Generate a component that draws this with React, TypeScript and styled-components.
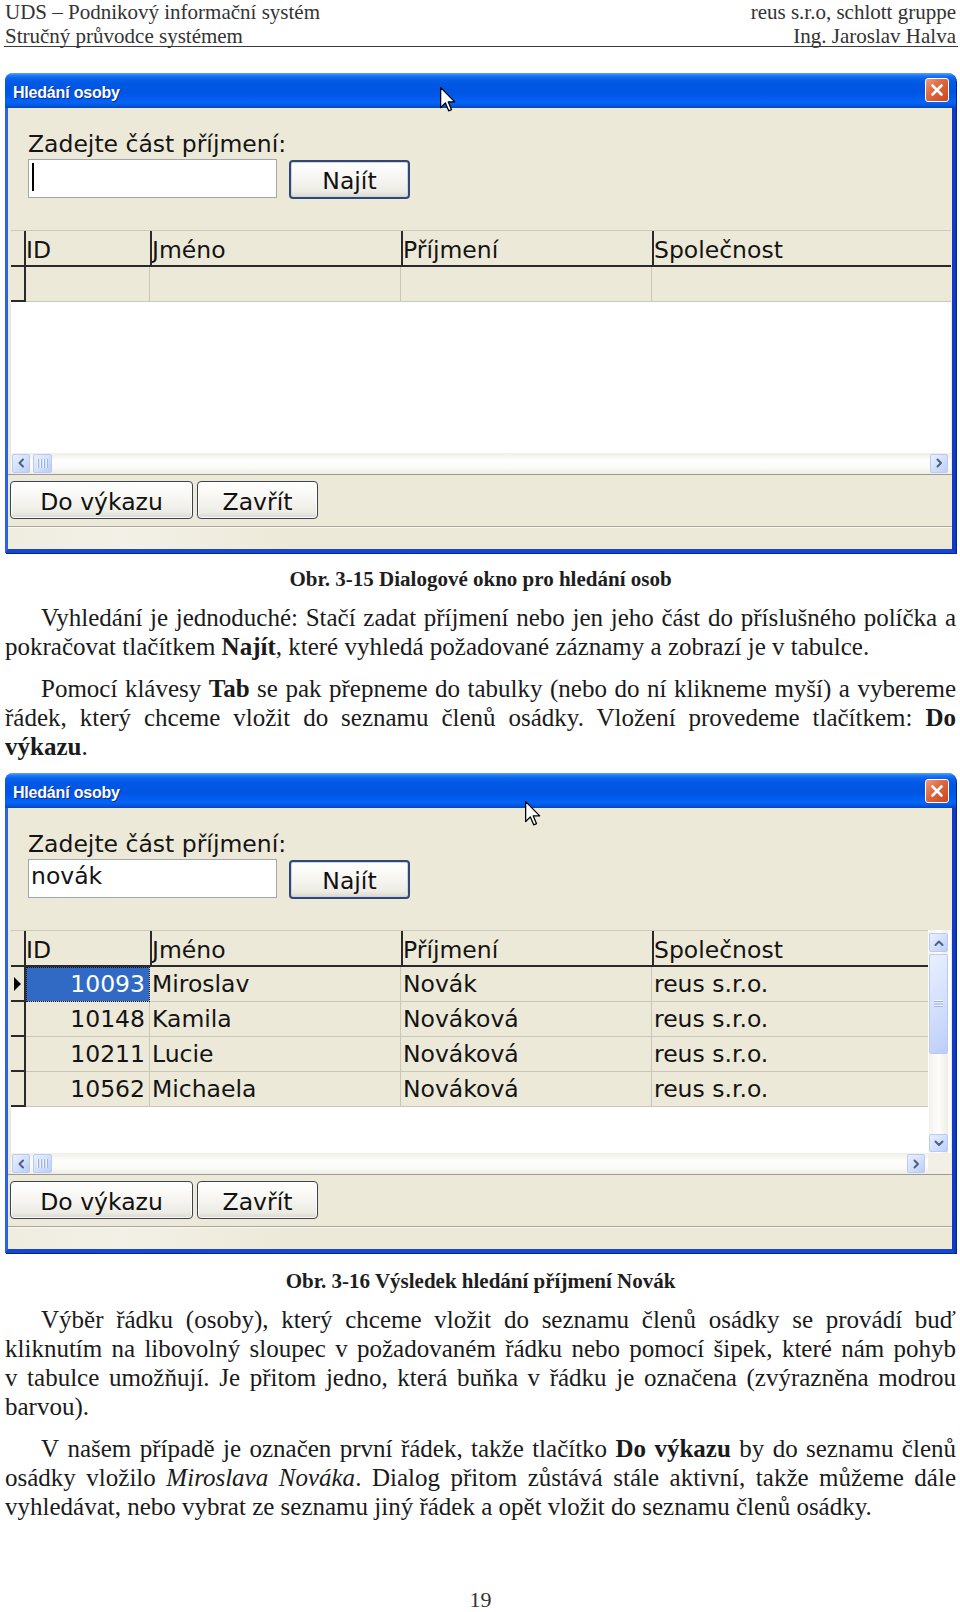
import React from "react";
import styled, { createGlobalStyle, css } from "styled-components";

const GlobalStyle = createGlobalStyle`
  html, body { margin: 0; padding: 0; background: #ffffff; }
  #root { width: 960px; }
`;

const UI_FONT = `"DejaVu Sans", Verdana, sans-serif`;
const COLS = "15px 124px 251px 251px 1fr";
const BEIGE = "#ece9d8";
const DARK_LINE = "#2a2a2a";
const LIGHT_LINE = "#cbc7b8";

const Page = styled.main`
  box-sizing: border-box;
  width: 960px;
  height: 1612px;
  padding: 0 4px 0 5px;
  overflow: hidden;
  display: flex;
  flex-direction: column;
  font-family: "Liberation Serif", "Times New Roman", serif;
  color: #1a1a1a;
`;

const RunningHead = styled.header`
  display: flex;
  flex-direction: column;
  gap: 4px;
  height: 44px;
  margin: 0 -2px 0 -1px;
  padding: 2px 2px 0 1px;
  border-bottom: 1.5px solid #3b3b3b;
  font-size: 21px;
  color: #333;
`;

const HeadLine = styled.div`
  display: flex;
  justify-content: space-between;
  height: 20px;
  line-height: 20px;
  white-space: nowrap;
`;

const Caption = styled.div<{ $mt: number }>`
  margin-top: ${(p) => p.$mt}px;
  font-weight: bold;
  font-size: 21px;
  line-height: 25px;
  text-align: center;
  color: #1e1e1e;
`;

const Para = styled.p<{ $mt: number }>`
  margin: ${(p) => p.$mt}px 0 0;
  font-size: 25px;
  line-height: 29px;
  text-align: justify;
  text-indent: 36px;
`;

const PageNumber = styled.div`
  margin-top: auto;
  height: 25px;
  line-height: 25px;
  font-size: 22px;
  text-align: center;
  color: #333;
`;

/* ---------- XP dialog ---------- */

const Window = styled.section<{ $mt: number }>`
  position: relative;
  margin-top: ${(p) => p.$mt}px;
  height: 480px;
  box-sizing: border-box;
  display: flex;
  flex-direction: column;
  background: ${BEIGE};
  border-style: solid;
  border-width: 0 4px 4px 3px;
  border-color: #1c52dc #0e3bc4 #1747cf #2c62e6;
  border-radius: 8px 8px 0 0;
  box-shadow: 1px 1px 0 #06238e;
  font-family: ${UI_FONT};
  color: #141414;
`;

const TitleBar = styled.div`
  flex: none;
  height: 35px;
  margin: 0 -4px 0 -3px;
  box-sizing: border-box;
  display: flex;
  align-items: center;
  justify-content: space-between;
  padding: 0 7px 0 8px;
  border-radius: 8px 8px 0 0;
  background: linear-gradient(
    180deg,
    #5aa2ff 0%,
    #2079f6 7%,
    #0a63ea 15%,
    #0058e4 30%,
    #0055e2 55%,
    #005cef 72%,
    #0464f6 84%,
    #0157de 93%,
    #0a44b8 100%
  );
`;

const TitleText = styled.span`
  padding-top: 5px;
  font: bold 16px "Liberation Sans", Arial, sans-serif;
  letter-spacing: -0.2px;
  color: #ffffff;
  text-shadow: 1px 1px 0 #0c2a86;
`;

const CloseBox = styled.div`
  width: 24px;
  height: 24px;
  box-sizing: border-box;
  display: flex;
  align-items: center;
  justify-content: center;
  border: 1px solid #ffffff;
  border-radius: 3px;
  background: linear-gradient(135deg, #f09a7c 0%, #df6a43 40%, #c9451f 100%);
`;

const SearchPanel = styled.div`
  flex: none;
  height: 122px;
  box-sizing: border-box;
  padding: 22px 0 0 20px;
  display: flex;
  flex-direction: column;
`;

const FieldLabel = styled.div`
  font-size: 23.5px;
  line-height: 29px;
  white-space: nowrap;
`;

const SearchRow = styled.div`
  display: flex;
  gap: 12px;
  align-items: flex-start;
`;

const TextField = styled.div`
  width: 249px;
  height: 39px;
  box-sizing: border-box;
  display: flex;
  align-items: flex-start;
  padding: 0 0 0 2px;
  border: 1px solid #a3a7ab;
  background: #ffffff;
  font-size: 23.5px;
  line-height: 33px;
`;

const Caret = styled.span`
  display: inline-block;
  width: 1.5px;
  height: 28px;
  margin: 3px 0 0 1px;
  background: #000;
`;

const PushButton = styled.button<{ $w: number; $h: number; $default?: boolean }>`
  flex: none;
  width: ${(p) => p.$w}px;
  height: ${(p) => p.$h}px;
  box-sizing: border-box;
  margin: ${(p) => (p.$default ? "1px 0 0" : "0")};
  padding: ${(p) => (p.$default ? "3px" : "4px")} 0 0;
  font-family: ${UI_FONT};
  font-size: 23.5px;
  color: #111;
  border: ${(p) => (p.$default ? "2px solid #34476e" : "1px solid #3d4250")};
  border-radius: 4px;
  background: linear-gradient(180deg, #ffffff 0%, #f7f6f2 45%, #ecebe4 85%, #d9d7cd 100%);
  box-shadow: inset 0 0 0 1px ${(p) => (p.$default ? "#c4d4f2" : "rgba(255,255,255,0.85)")};
  white-space: nowrap;
`;

const TableArea = styled.div`
  flex: none;
  height: 223px;
  margin: 0 1px 0 3px;
  display: flex;
  background: #ffffff;
`;

const Grid = styled.div`
  flex: 1;
  min-width: 0;
  display: flex;
  flex-direction: column;
`;

const HeadRow = styled.div`
  display: grid;
  grid-template-columns: ${COLS};
  height: 37px;
  box-sizing: border-box;
  border-top: 1px solid #cdc9ba;
  border-bottom: 2px solid ${DARK_LINE};
  background: ${BEIGE};
`;

const HeadCorner = styled.div`
  border-right: 2px solid ${DARK_LINE};
`;

const HeadCell = styled.div<{ $sep?: boolean }>`
  box-sizing: border-box;
  min-width: 0;
  padding-top: 5px;
  line-height: 28px;
  font-size: 23.5px;
  white-space: nowrap;
  overflow: hidden;
  border-left: ${(p) => (p.$sep ? `2px solid ${DARK_LINE}` : "none")};
`;

const DataRow = styled.div`
  display: grid;
  grid-template-columns: ${COLS};
  height: 35px;
  background: ${BEIGE};
`;

const RowHead = styled.div`
  box-sizing: border-box;
  display: flex;
  align-items: center;
  justify-content: center;
  border-right: 2px solid ${DARK_LINE};
  border-bottom: 2px solid ${DARK_LINE};
`;

const Cell = styled.div<{ $num?: boolean; $selected?: boolean; $last?: boolean }>`
  box-sizing: border-box;
  min-width: 0;
  line-height: 34px;
  font-size: 23.5px;
  white-space: nowrap;
  overflow: hidden;
  border-bottom: 1px solid ${LIGHT_LINE};
  border-right: ${(p) => (p.$last ? "none" : `1px solid ${LIGHT_LINE}`)};
  padding: ${(p) => (p.$num ? "0 4px 0 0" : "0 0 0 2px")};
  text-align: ${(p) => (p.$num ? "right" : "left")};
  ${(p) =>
    p.$selected &&
    css`
      background: #316ac5;
      color: #ffffff;
      outline: 1px dotted #111;
      outline-offset: -1px;
    `}
`;

const VScroll = styled.div`
  flex: none;
  width: 19px;
  margin: 0 3px 0 1px;
  padding: 3px 0 1px;
  box-sizing: border-box;
  display: flex;
  flex-direction: column;
  gap: 2px;
  background: linear-gradient(90deg, #f3f2ec, #fdfdfb 50%, #efeee6);
`;

const ScrollBtn = styled.div<{ $w: number; $h: number }>`
  flex: none;
  width: ${(p) => p.$w}px;
  height: ${(p) => p.$h}px;
  box-sizing: border-box;
  display: flex;
  align-items: center;
  justify-content: center;
  border: 1px solid #b9cbf3;
  border-radius: 2px;
  background: linear-gradient(135deg, #e9f0fe 0%, #d2defc 55%, #bccdf8 100%);
`;

const Spacer = styled.div`
  flex: 1;
`;

const HScrollRow = styled.div`
  flex: none;
  height: 21px;
  margin: 0 1px 0 3px;
  display: flex;
`;

const HTrack = styled.div`
  flex: 1;
  display: flex;
  align-items: center;
  gap: 3px;
  padding: 0 3px 0 1px;
  background: linear-gradient(180deg, #efeee7 0%, #fdfdfb 35%, #fbfbf8 70%, #edece4 100%);
`;

const ScrollCorner = styled.div`
  flex: none;
  width: 23px;
  background: #f1efe6;
`;

const ButtonPanel = styled.div`
  flex: none;
  height: 53px;
  box-sizing: border-box;
  display: flex;
  gap: 4px;
  padding: 6px 0 0 2px;
  border-top: 1px solid #9d9b90;
  border-bottom: 1px solid #a9a79b;
`;

const StatusStrip = styled.div`
  flex: 1;
  background: linear-gradient(90deg, #efece0 0%, #f3f1e7 12%, #ece9d8 30%);
  border-top: 1px solid #f8f7f2;
`;

const Pointer = styled.svg<{ $x: number; $y: number }>`
  position: absolute;
  left: ${(p) => p.$x}px;
  top: ${(p) => p.$y}px;
  pointer-events: none;
`;

/* ---------- icons ---------- */

const Chevron = ({ dir }: { dir: "left" | "right" | "up" | "down" }) => {
  const d = {
    left: "M6 1.5 L2.5 5 L6 8.5",
    right: "M2.5 1.5 L6 5 L2.5 8.5",
    up: "M1.5 6 L5 2.5 L8.5 6",
    down: "M1.5 2.5 L5 6 L8.5 2.5",
  }[dir];
  const horizontal = dir === "left" || dir === "right";
  return (
    <svg
      width={horizontal ? 8 : 10}
      height={horizontal ? 10 : 8}
      viewBox={horizontal ? "0 0 8 10" : "0 0 10 8"}
    >
      <path d={d} fill="none" stroke="#4d6185" strokeWidth="2" strokeLinecap="round" strokeLinejoin="round" />
    </svg>
  );
};

const GripV = () => (
  <svg width="11" height="9" viewBox="0 0 11 9">
    {[1, 4, 7, 10].map((x) => (
      <g key={x}>
        <rect x={x - 1} y="0" width="1" height="9" fill="#eef3ff" />
        <rect x={x} y="0" width="1" height="9" fill="#9fb3e0" />
      </g>
    ))}
  </svg>
);

const GripH = () => (
  <svg width="9" height="8" viewBox="0 0 9 8">
    {[1, 3.5, 6].map((y) => (
      <g key={y}>
        <rect x="0" y={y - 1} width="9" height="1" fill="#eef3ff" />
        <rect x="0" y={y} width="9" height="1" fill="#9fb3e0" />
      </g>
    ))}
  </svg>
);

/* ---------- data ---------- */

type Person = { id: string; first: string; last: string; company: string };

const people: Person[] = [
  { id: "10093", first: "Miroslav", last: "Novák", company: "reus s.r.o." },
  { id: "10148", first: "Kamila", last: "Nováková", company: "reus s.r.o." },
  { id: "10211", first: "Lucie", last: "Nováková", company: "reus s.r.o." },
  { id: "10562", first: "Michaela", last: "Nováková", company: "reus s.r.o." },
];

type DialogProps = {
  mt: number;
  query?: string;
  rows: Person[];
  selected?: number;
  pointer: { x: number; y: number };
  vscroll?: boolean;
};

function SearchDialog({ mt, query, rows, selected, pointer, vscroll }: DialogProps) {
  return (
    <Window $mt={mt}>
      <TitleBar>
        <TitleText>Hledání osoby</TitleText>
        <CloseBox>
          <svg width="14" height="14" viewBox="0 0 14 14">
            <path d="M2.5 2.5 L11.5 11.5 M11.5 2.5 L2.5 11.5" stroke="#fff" strokeWidth="2.6" strokeLinecap="round" />
          </svg>
        </CloseBox>
      </TitleBar>

      <SearchPanel>
        <FieldLabel>Zadejte část příjmení:</FieldLabel>
        <SearchRow>
          <TextField>{query ? query : <Caret />}</TextField>
          <PushButton $w={121} $h={39} $default>
            Najít
          </PushButton>
        </SearchRow>
      </SearchPanel>

      <TableArea>
        <Grid>
          <HeadRow>
            <HeadCorner />
            <HeadCell>ID</HeadCell>
            <HeadCell $sep>Jméno</HeadCell>
            <HeadCell $sep>Příjmení</HeadCell>
            <HeadCell $sep>Společnost</HeadCell>
          </HeadRow>
          {rows.length === 0 ? (
            <DataRow>
              <RowHead />
              <Cell $num />
              <Cell />
              <Cell />
              <Cell $last />
            </DataRow>
          ) : (
            rows.map((r, i) => (
              <DataRow key={r.id}>
                <RowHead>
                  {i === selected && (
                    <svg width="7" height="14" viewBox="0 0 7 14">
                      <path d="M0 0 L7 7 L0 14 Z" fill="#000" />
                    </svg>
                  )}
                </RowHead>
                <Cell $num $selected={i === selected}>
                  {r.id}
                </Cell>
                <Cell>{r.first}</Cell>
                <Cell>{r.last}</Cell>
                <Cell $last>{r.company}</Cell>
              </DataRow>
            ))
          )}
        </Grid>
        {vscroll && (
          <VScroll>
            <ScrollBtn $w={19} $h={19}>
              <Chevron dir="up" />
            </ScrollBtn>
            <ScrollBtn $w={19} $h={100}>
              <GripH />
            </ScrollBtn>
            <Spacer />
            <ScrollBtn $w={19} $h={18}>
              <Chevron dir="down" />
            </ScrollBtn>
          </VScroll>
        )}
      </TableArea>

      <HScrollRow>
        <HTrack>
          <ScrollBtn $w={18} $h={19}>
            <Chevron dir="left" />
          </ScrollBtn>
          <ScrollBtn $w={19} $h={19}>
            <GripV />
          </ScrollBtn>
          <Spacer />
          <ScrollBtn $w={18} $h={19}>
            <Chevron dir="right" />
          </ScrollBtn>
        </HTrack>
        {vscroll && <ScrollCorner />}
      </HScrollRow>

      <ButtonPanel>
        <PushButton $w={183} $h={38}>
          Do výkazu
        </PushButton>
        <PushButton $w={121} $h={38}>
          Zavřít
        </PushButton>
      </ButtonPanel>
      <StatusStrip />

      <Pointer $x={pointer.x} $y={pointer.y} width="16" height="25" viewBox="0 0 12.5 19.5">
        <path
          d="M0.5 0.5 V16 L4.2 12.4 L6.8 18.6 L9 17.7 L6.4 11.6 H11.5 Z"
          fill="#ffffff"
          stroke="#000000"
          strokeWidth="1"
          strokeLinejoin="round"
        />
      </Pointer>
    </Window>
  );
}

export default function App() {
  return (
    <>
      <GlobalStyle />
      <Page>
        <RunningHead>
          <HeadLine>
            <span>UDS – Podnikový informační systém</span>
            <span>reus s.r.o, schlott gruppe</span>
          </HeadLine>
          <HeadLine>
            <span>Stručný průvodce systémem</span>
            <span>Ing. Jaroslav Halva</span>
          </HeadLine>
        </RunningHead>

        <SearchDialog mt={25.5} rows={[]} pointer={{ x: 432, y: 14 }} />

        <Caption $mt={14}>Obr. 3-15 Dialogové okno pro hledání osob</Caption>

        <Para $mt={11.5}>
          Vyhledání je jednoduché: Stačí zadat příjmení nebo jen jeho část do příslušného políčka a
          pokračovat tlačítkem <b>Najít</b>, které vyhledá požadované záznamy a zobrazí je v&nbsp;tabulce.
        </Para>
        <Para $mt={13}>
          Pomocí klávesy <b>Tab</b> se pak přepneme do tabulky (nebo do ní klikneme myší) a vybereme
          řádek, který chceme vložit do seznamu členů osádky. Vložení provedeme tlačítkem: <b>Do</b>{" "}
          <b>výkazu</b>.
        </Para>

        <SearchDialog
          mt={12}
          query="novák"
          rows={people}
          selected={0}
          vscroll
          pointer={{ x: 517, y: 28 }}
        />

        <Caption $mt={15.5}>Obr. 3-16 Výsledek hledání příjmení Novák</Caption>

        <Para $mt={11}>
          Výběr řádku (osoby), který chceme vložit do seznamu členů osádky se provádí buď kliknutím na
          libovolný sloupec v&nbsp;požadovaném řádku nebo pomocí šipek, které nám pohyb v&nbsp;tabulce
          umožňují. Je přitom jedno, která buňka v&nbsp;řádku je označena (zvýrazněna modrou barvou).
        </Para>
        <Para $mt={13.5}>
          V&nbsp;našem případě je označen první řádek, takže tlačítko <b>Do výkazu</b> by do seznamu členů
          osádky vložilo <i>Miroslava Nováka</i>. Dialog přitom zůstává stále aktivní, takže můžeme dále
          vyhledávat, nebo vybrat ze seznamu jiný řádek a opět vložit do seznamu členů osádky.
        </Para>

        <PageNumber>19</PageNumber>
      </Page>
    </>
  );
}
